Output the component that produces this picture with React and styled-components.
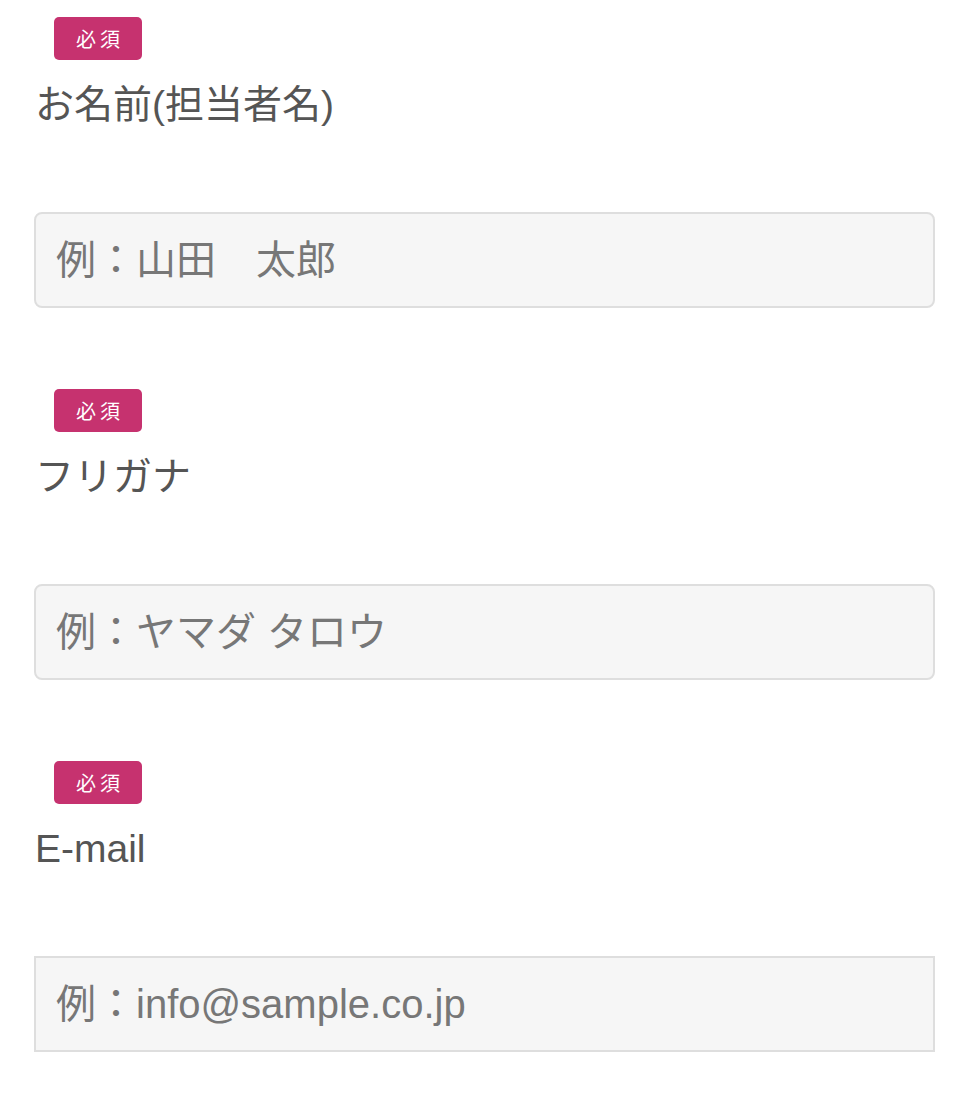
import React from "react";
import styled, { createGlobalStyle } from "styled-components";

const GlobalStyle = createGlobalStyle`
  html, body {
    margin: 0;
    padding: 0;
    background: #fff;
  }
  body {
    font-family: "Liberation Sans", "Noto Sans CJK JP", sans-serif;
  }
`;

const Form = styled.form`
  width: 974px;
  box-sizing: border-box;
  padding: 17px 39px 0 34px;
`;

const Field = styled.div`
  display: flex;
  flex-direction: column;
  align-items: flex-start;
  margin-bottom: 81px;
`;

const Badge = styled.span`
  display: flex;
  align-items: center;
  justify-content: center;
  margin-left: 20px;
  width: 88px;
  height: 43px;
  border-radius: 5px;
  background-color: #c6326f;
  color: #fff;
  font-size: 20px;
  letter-spacing: 4px;
  padding-left: 4px;
  box-sizing: border-box;
`;

const Label = styled.label`
  margin-top: 15px;
  font-size: 39px;
  line-height: 60px;
  color: #555;
  padding-left: 1px;
`;

const Input = styled.input`
  margin-top: 77px;
  width: 100%;
  height: 96px;
  box-sizing: border-box;
  padding: 0 20px;
  background-color: #f6f6f6;
  border: solid 2px #dedede;
  border-radius: ${(props) => (props.type === "email" ? "0" : "8px")};
  font-family: inherit;
  font-size: 40px;
  color: #333;
  outline: none;
  &::placeholder {
    color: #777;
  }
`;

const fields = [
  { id: "name", label: "お名前(担当者名)", type: "text", placeholder: "例：山田　太郎" },
  { id: "kana", label: "フリガナ", type: "text", placeholder: "例：ヤマダ タロウ" },
  { id: "email", label: "E-mail", type: "email", placeholder: "例：info@sample.co.jp" },
];

function App() {
  return (
    <>
      <GlobalStyle />
      <Form>
        {fields.map((f) => (
          <Field key={f.id}>
            <Badge>必須</Badge>
            <Label htmlFor={f.id}>{f.label}</Label>
            <Input id={f.id} type={f.type} placeholder={f.placeholder} />
          </Field>
        ))}
      </Form>
    </>
  );
}

export default App;
